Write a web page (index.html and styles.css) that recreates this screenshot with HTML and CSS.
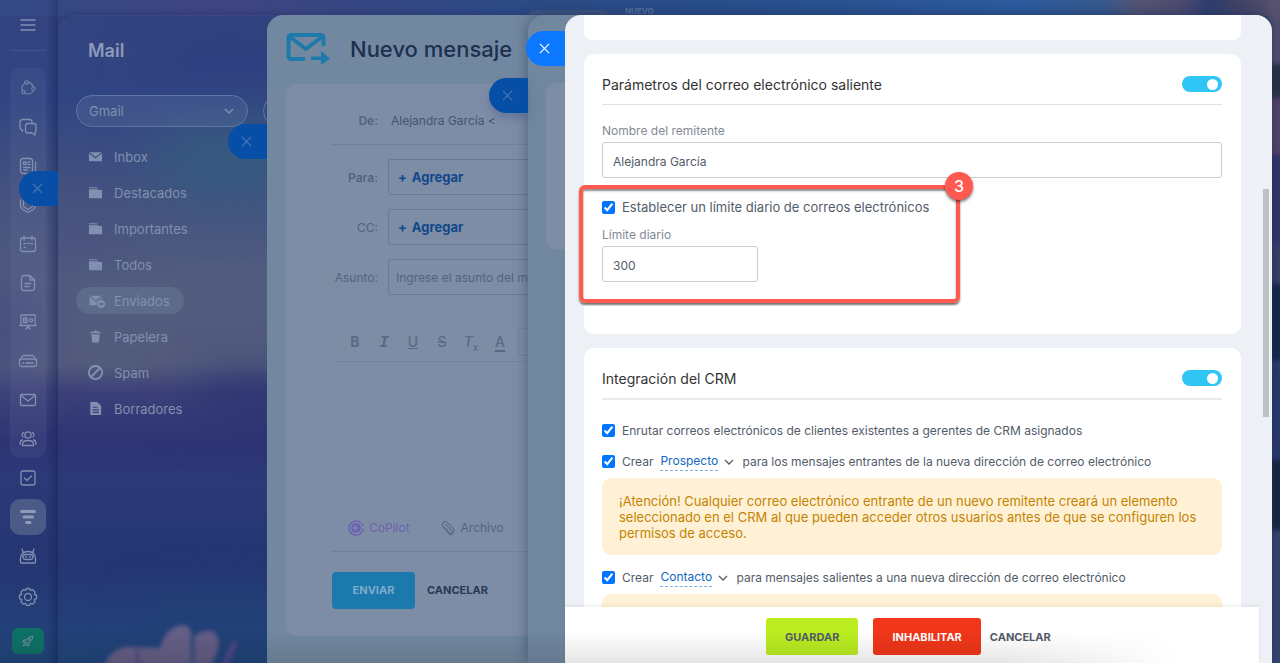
FILE: index.html
```
<!DOCTYPE html>
<html lang="es">
<head>
  <meta charset="UTF-8">
  <title>Mail - Nuevo mensaje</title>
  <link rel="stylesheet" href="styles.css">
</head>
<body>

  <!-- wallpaper -->
  <svg class="wallpaper" viewBox="0 0 1280 663" preserveAspectRatio="none" aria-hidden="true">
    <defs>
      <linearGradient id="sky" x1="0" y1="0" x2="0" y2="1">
        <stop offset="0" stop-color="#33437f"/>
        <stop offset=".15" stop-color="#314583"/>
        <stop offset=".3" stop-color="#455380"/>
        <stop offset=".42" stop-color="#515c7f"/>
        <stop offset=".55" stop-color="#535b7d"/>
        <stop offset=".59" stop-color="#3d4179"/>
        <stop offset=".67" stop-color="#2e3474"/>
        <stop offset=".72" stop-color="#2c3979"/>
        <stop offset=".85" stop-color="#253673"/>
        <stop offset="1" stop-color="#22467c"/>
      </linearGradient>
      <linearGradient id="top" x1="0" y1="0" x2="1" y2="0">
        <stop offset="0" stop-color="#334a85"/>
        <stop offset=".17" stop-color="#3f4482"/>
        <stop offset=".4" stop-color="#2c4a85"/>
        <stop offset=".6" stop-color="#28508e"/>
        <stop offset=".8" stop-color="#2d5ca0"/>
        <stop offset=".86" stop-color="#375a90"/>
        <stop offset=".89" stop-color="#545571"/>
        <stop offset=".92" stop-color="#504c6f"/>
        <stop offset=".945" stop-color="#2f3f6e"/>
        <stop offset=".97" stop-color="#444365"/>
        <stop offset="1" stop-color="#5a5470"/>
      </linearGradient>
      <filter id="soft" x="-30%" y="-30%" width="160%" height="160%" color-interpolation-filters="sRGB"><feGaussianBlur stdDeviation="2"/></filter>
      <filter id="haze" x="-50%" y="-50%" width="200%" height="200%" color-interpolation-filters="sRGB"><feGaussianBlur stdDeviation="26"/></filter>
    </defs>
    <rect width="1280" height="663" fill="url(#sky)"/>
    <g filter="url(#haze)">
      <ellipse cx="230" cy="160" rx="80" ry="40" fill="#355b80"/>
      <ellipse cx="230" cy="62" rx="80" ry="20" fill="#2d3d80"/>
      <ellipse cx="80" cy="230" rx="50" ry="16" fill="#494f80"/>
      <ellipse cx="250" cy="398" rx="60" ry="18" fill="#26306f"/>
      <ellipse cx="10" cy="330" rx="24" ry="60" fill="#434a80"/>
      <ellipse cx="220" cy="620" rx="80" ry="16" fill="#1f4276"/>
    </g>
    <rect width="1280" height="16" fill="url(#top)"/>
    <g filter="url(#soft)">
      <path d="M104 665Q112 648 128 647L160 648Q166 626 184 625Q193 627 191 642Q192 665 192 665Z" fill="#665f86"/>
      <path d="M194 665V636Q202 630 213 631Q222 638 217 652L212 665Z" fill="#645d85"/>
      <path d="M138 665L137 649" fill="none" stroke="#4b4880" stroke-width="3"/>
      <path d="M222 665Q228 646 236 638Q238 650 227 665Z" fill="#514885"/>
      <rect x="1268" y="0" width="14" height="66" fill="#575270"/>
      <rect x="1268" y="64" width="14" height="36" fill="#2c303f"/>
      <rect x="1268" y="98" width="14" height="56" fill="#5c4369"/>
      <rect x="1268" y="154" width="14" height="90" fill="#333469"/>
      <rect x="1268" y="244" width="14" height="40" fill="#3a3b66"/>
      <rect x="1268" y="284" width="14" height="76" fill="#142543"/>
      <rect x="1268" y="360" width="14" height="100" fill="#29396c"/>
      <rect x="1268" y="460" width="14" height="70" fill="#15233f"/>
      <rect x="1268" y="530" width="14" height="133" fill="#39476f"/>
    </g>
  </svg>

  <div class="topbar">
    <span class="topbar-tab"></span>
    <span class="topbar-label">NUEVO</span>
  </div>

  <nav class="rail" aria-label="Menú principal">
    <button class="rail-item rail-menu" aria-label="Menú">
      <svg viewBox="0 0 20 20"><path d="M3 5h14M3 10h14M3 15h14"/></svg>
    </button>
    <div class="rail-group">
      <a class="rail-item dim" href="#" aria-label="Colaboración"><svg viewBox="0 0 20 20"><path d="M10.500 4.500a6 6 0 0 1 4.500 4M15 13a6 6 0 0 1-7.500 2.500M4.500 12.500a6 6 0 0 1 2-7"/><circle cx="8.500" cy="4.500" r="1.700"/><circle cx="15.500" cy="10.500" r="1.700"/><circle cx="5.500" cy="14" r="1.700"/></svg></a>
      <a class="rail-item" href="#" aria-label="Chat"><svg viewBox="0 0 20 20"><path d="M4.500 14.500v-1.500c-1.500-.3-2.500-1-2.500-2V5a2.500 2.500 0 0 1 2.500-2.500h7a2.500 2.500 0 0 1 2.500 2.700"/><path d="M10 6.500h5.500a2.500 2.500 0 0 1 2.500 2.500v4.500a2.500 2.500 0 0 1-1 2V18l-3-2h-4a2.500 2.500 0 0 1-2.500-2.500V9a2.500 2.500 0 0 1 2.500-2.500z"/></svg></a>
      <a class="rail-item" href="#" aria-label="Noticias"><svg viewBox="0 0 20 20"><rect x="2.500" y="2.500" width="12" height="15" rx="2.500"/><path d="M17.500 6v8.500a3 3 0 0 1-2 3M5.500 6h2.500v2.500h-2.500zM10 6h2M10 8.500h2M5.500 11.500h6.500M5.500 14h4"/></svg></a>
      <a class="rail-item" href="#" aria-label="Seguridad"><svg viewBox="0 0 20 20"><path d="M2.500 5v6l1.500 3 6 3.500 6-3.500 1.500-3V5"/><path d="M5.500 5v6.500l4.500 3 4.500-3V5"/></svg></a>
      <a class="rail-item" href="#" aria-label="Calendario"><svg viewBox="0 0 20 20"><rect x="2.500" y="4" width="15" height="13.500" rx="2.500"/><path d="M6 2v4M14 2v4M6 9.500h1.500M9.500 9.500h1.500M13 9.500h1.500M6 13.500h1.500"/></svg></a>
      <a class="rail-item" href="#" aria-label="Documentos"><svg viewBox="0 0 20 20"><path d="M6 2.500h6l4.500 4.500v8a2.500 2.500 0 0 1-2.500 2.500H6a2.500 2.500 0 0 1-2.500-2.500V5a2.500 2.500 0 0 1 2.500-2.500zM12 2.500V7h4.500M7 10.500h6M7 13.500h4"/></svg></a>
      <a class="rail-item" href="#" aria-label="Pizarras"><svg viewBox="0 0 20 20"><path d="M3 3h14v10.500H3zM1.500 13.500h17M8 17l2-2.500 2 2.500M5.500 6h3.500v4.500h-3.500zM5.500 8.200h3.500"/><circle cx="13" cy="8.200" r="1.600"/></svg></a>
      <a class="rail-item" href="#" aria-label="Drive"><svg viewBox="0 0 20 20"><rect x="1.500" y="8" width="17" height="7.500" rx="2"/><path d="M2 9l2.500-4Q5 4.500 6 4.500h8q1 0 1.500.5L18 9M8 12h7M4.800 12h.8"/></svg></a>
      <a class="rail-item" href="#" aria-label="Correo"><svg viewBox="0 0 20 20"><rect x="2.500" y="4.500" width="15" height="11" rx="1"/><path d="M3 5.500l7 5.500 7-5.500"/></svg></a>
      <a class="rail-item" href="#" aria-label="Grupos"><svg viewBox="0 0 20 20"><circle cx="10" cy="6" r="3.200"/><path d="M4.500 16.500v-1.500Q5 11.500 10 11.500t5.500 3.500v1.500zM5.500 3.500Q3 5 5 8M14.500 3.500Q17 5 15 8M4.500 11q-2.500.5-2.500 4.500M15.500 11q2.500.5 2.500 4.500"/></svg></a>
    </div>
    <a class="rail-item" href="#" aria-label="Tareas"><svg viewBox="0 0 20 20"><rect x="3" y="3" width="14" height="14" rx="2"/><path d="M6.500 10l2.500 2.500 4.500-4.500"/></svg></a>
    <a class="rail-item active" href="#" aria-label="CRM"><svg viewBox="0 0 20 20"><path d="M3.500 4.500h13M6 10h8.500M8.500 15.500h3.500" stroke-width="3"/></svg></a>
    <a class="rail-item" href="#" aria-label="Automatización"><svg viewBox="0 0 20 20"><path d="M2.500 16.500v-4Q3 5.500 10 5.500t7.500 7v4q0 .5-1 .5h-13q-1 0-1-.5zM4 3l1.500 4M16 3l-1.500 4"/><rect x="5" y="8.500" width="10" height="5" rx="2.500"/><path d="M7.500 11h1M11.500 11h1"/></svg></a>
    <a class="rail-item rail-settings" href="#" aria-label="Ajustes"><svg viewBox="0 0 20 20"><circle cx="10" cy="10" r="3.500"/><path d="M8.500 1.500h3l.9 1.900 2.200-.7 2.400 2.400-.7 2.200 2.200.9v3.400l-2.200.9.7 2.200-2.400 2.400-2.200-.7-.9 2h-3l-.9-2-2.200.7L3 14.700l.7-2.200-2.200-.9V8.200l2.200-.9L3 5.100l2.400-2.400 2.200.7z"/></svg></a>
    <button class="rocket" aria-label="Inicio rápido"><svg viewBox="0 0 20 20"><path d="M7 9Q10 3.500 17 3q-.5 7-6 10l-2 1-3-3zM7 8.500H4l-1.500 3 3.500.5M11.500 13v3l-3 1.500-.5-3.500M5 14l-2 3 3-1.500"/><circle cx="12" cy="8" r="1.500"/></svg></button>
  </nav>

  <!-- mail section -->
  <main class="panel panel-mail">
    <button class="close-tab" aria-label="Cerrar"><svg viewBox="0 0 12 12"><path d="M1 1l10 10M11 1L1 11"/></svg></button>
    <h1 class="mail-title">Mail</h1>
    <div class="mail-filter">
      <label class="mailbox">
        <select aria-label="Buzón"><option>Gmail</option></select>
        <svg viewBox="0 0 10 10"><path d="M1 3l4 4 4-4"/></svg>
      </label>
      <input class="mail-search" type="text" aria-label="Buscar">
    </div>
    <nav class="folders" aria-label="Carpetas">
      <a href="#"><svg viewBox="0 0 16 16"><path d="M1.500 3.500h13L8 8.500zM1 4.500l7 5.500 7-5.500v8.500H1z"/></svg>Inbox</a>
      <a href="#"><svg viewBox="0 0 16 16"><path d="M1 2.500h8l1.500 1H1zM1 4.500h9.500l1 .8H15V14H1z"/></svg>Destacados</a>
      <a href="#"><svg viewBox="0 0 16 16"><path d="M1 2.500h8l1.500 1H1zM1 4.500h9.500l1 .8H15V14H1z"/></svg>Importantes</a>
      <a href="#"><svg viewBox="0 0 16 16"><path d="M1 2.500h8l1.500 1H1zM1 4.500h9.500l1 .8H15V14H1z"/></svg>Todos</a>
      <a class="current" href="#"><svg class="sent" viewBox="0 0 18 16"><path d="M1.500 3h12L7.500 8zM1 4l6.500 5.500L14 4v2.500a5 5 0 0 0-5 6.500H1z"/><path fill-rule="evenodd" d="M13.500 7.500a4.200 4.200 0 1 0 .01 0zM11 11h2.500V9.500l2.700 2.200-2.700 2.200v-1.500H11z"/></svg>Enviados</a>
      <a href="#"><svg viewBox="0 0 16 16"><path d="M2.500 3H6l1-1.500h2L10 3h3.500v1.500h-11zM3.500 5.500h9l-1 9h-7z"/></svg>Papelera</a>
      <a href="#"><svg viewBox="0 0 16 16"><path fill="none" stroke="currentColor" stroke-width="2" d="M8 1a7 7 0 1 0 .01 0zM3.500 12.500l9-9"/></svg>Spam</a>
      <a href="#"><svg viewBox="0 0 16 16"><path fill-rule="evenodd" d="M2.500 1h7L14 5v10H2.500zM5 6v1.200h5V6zM5 8.800V10h6.500V8.800zM5 11.500v1.200h6.500v-1.200z"/></svg>Borradores</a>
    </nav>
  </main>

  <!-- new message -->
  <section class="panel panel-message">
    <button class="close-tab" aria-label="Cerrar"><svg viewBox="0 0 12 12"><path d="M1 1l10 10M11 1L1 11"/></svg></button>
    <header class="message-header">
      <svg viewBox="0 0 44 32"><path d="M19 26H5a2.500 2.500 0 0 1-2.500-2.500v-19A2.500 2.500 0 0 1 5 2h30a2.500 2.500 0 0 1 2.500 2.500V13M3.500 3.500L20 16 36.500 3.500"/><path class="arrow" d="M25 23.500h10V18l9 7.500-9 6.500v-5H25z"/></svg>
      <h2>Nuevo mensaje</h2>
    </header>
    <form class="message-card">
      <div class="message-row message-from">
        <span class="row-label strong">De:</span>
        <span class="row-value">Alejandra García &lt;</span>
      </div>
      <div class="message-row">
        <span class="row-label strong">Para:</span>
        <button class="recipients" type="button"><span>+</span>Agregar</button>
      </div>
      <div class="message-row">
        <span class="row-label">CC:</span>
        <button class="recipients" type="button"><span>+</span>Agregar</button>
      </div>
      <div class="message-row">
        <label class="row-label" for="asunto">Asunto:</label>
        <input class="subject" id="asunto" type="text" placeholder="Ingrese el asunto del mensaje">
      </div>
      <div class="editor-bar">
        <button type="button"><b>B</b></button>
        <button type="button"><i class="serif">I</i></button>
        <button type="button"><u>U</u></button>
        <button type="button"><s>S</s></button>
        <button type="button"><i>T</i><sub>x</sub></button>
        <button type="button"><span class="ink">A</span></button>
        <select class="font-list" aria-label="Fuente"><option></option></select>
      </div>
      <textarea class="editor" aria-label="Mensaje"></textarea>
      <div class="attach-bar">
        <button class="copilot" type="button"><svg viewBox="0 0 16 16"><path d="M12.500 2.700A7 7 0 1 0 15 8.500" fill="none" stroke="currentColor" stroke-width="1.500"/><path d="M15 6Q14.500 4.500 13.500 3.700" fill="none" stroke="currentColor" stroke-width="1.500"/><circle cx="8" cy="8" r="5"/><path class="spark" d="M7.500 4.500l.9 2.600 2.600.9-2.600.9-.9 2.600-.9-2.600L4 8l2.600-.9z"/></svg>CoPilot</button>
        <button type="button"><svg viewBox="0 0 16 16"><path d="M4 6.500l5.500 6M5.500 4l6 6.500q1 1.500 0 2.500-1.500 1.500-3 0L3 7Q1 4.500 3 2.500t4.500 0L13 8.500q2 2.500 0 5-2 2-4.500.5" fill="none" stroke="currentColor"/></svg>Archivo</button>
      </div>
      <div class="message-actions">
        <button class="send" type="button">ENVIAR</button>
        <button class="text-button" type="button">CANCELAR</button>
      </div>
    </form>
  </section>

  <section class="panel panel-back">
    <button class="close-tab" aria-label="Cerrar"><svg viewBox="0 0 12 12"><path d="M1 1l10 10M11 1L1 11"/></svg></button>
    <div class="back-card"></div>
  </section>

  <!-- mailbox settings -->
  <section class="panel panel-settings">
    <button class="close-tab active" aria-label="Cerrar"><svg viewBox="0 0 12 12"><path d="M1 1l10 10M11 1L1 11"/></svg></button>
    <div class="settings-scroll">
      <div class="card card-prev"></div>

      <div class="card card-outgoing">
        <div class="card-head">
          <h3>Parámetros del correo electrónico saliente</h3>
          <input class="switch" type="checkbox" checked aria-label="Parámetros del correo electrónico saliente">
        </div>
        <label class="field-label" for="remitente">Nombre del remitente</label>
        <input class="field" id="remitente" type="text" value="Alejandra García">
        <div class="limit">
          <label class="check"><input type="checkbox" checked>Establecer un límite diario de correos electrónicos</label>
          <label class="field-label" for="limite">Límite diario</label>
          <input class="field field-small" id="limite" type="text" value="300">
          <div class="highlight"><span class="step">3</span></div>
        </div>
      </div>

      <div class="card card-crm">
        <div class="card-head thick">
          <h3>Integración del CRM</h3>
          <input class="switch" type="checkbox" checked aria-label="Integración del CRM">
        </div>
        <label class="check"><input type="checkbox" checked>Enrutar correos electrónicos de clientes existentes a gerentes de CRM asignados</label>
        <div class="check">
          <input id="entrantes" type="checkbox" checked>
          <label for="entrantes">Crear</label>
          <select aria-label="Elemento para mensajes entrantes"><option>Prospecto</option></select>
          <svg viewBox="0 0 10 10"><path d="M1 3l4 4 4-4"/></svg>
          <span>para los mensajes entrantes de la nueva dirección de correo electrónico</span>
        </div>
        <p class="alert">¡Atención! Cualquier correo electrónico entrante de un nuevo remitente creará un elemento seleccionado en el CRM al que pueden acceder otros usuarios antes de que se configuren los permisos de acceso.</p>
        <div class="check">
          <input id="salientes" type="checkbox" checked>
          <label for="salientes">Crear</label>
          <select aria-label="Elemento para mensajes salientes"><option>Contacto</option></select>
          <svg viewBox="0 0 10 10"><path d="M1 3l4 4 4-4"/></svg>
          <span>para mensajes salientes a una nueva dirección de correo electrónico</span>
        </div>
        <div class="alert"></div>
      </div>
    </div>
    <div class="scrollbar"></div>
    <footer class="settings-footer">
      <button class="save">GUARDAR</button>
      <button class="disable">INHABILITAR</button>
      <button class="text-button">CANCELAR</button>
    </footer>
  </section>

  <div class="bottom-shade"></div>

</body>
</html>
```
FILE: styles.css
```
* {
  box-sizing: border-box;
}
body {
  margin: 0;
  height: 100vh;
  overflow: hidden;
  position: relative;
  background: #2d3b7a;
  font-family: Inter, "Open Sans", sans-serif;
  font-size: 13px;
  color: #525c69;
}
button, input, select, textarea {
  font: inherit;
  color: inherit;
}
button {
  border: none;
  background: none;
  padding: 0;
  cursor: pointer;
}
select {
  appearance: none;
  border: none;
  background: none;
  padding: 0;
}
h1, h2, h3, p {
  margin: 0;
}
a {
  color: inherit;
  text-decoration: none;
}
svg {
  flex: none;
}
.wallpaper {
  position: absolute;
  inset: 0;
  width: 100%;
  height: 100%;
}

/* top bar */
.topbar {
  position: absolute;
  top: 0;
  left: 528px;
  display: flex;
  gap: 15px;
}
.topbar-tab {
  width: 82px;
  height: 30px;
  margin-top: 10px;
  border-radius: 8px;
  background: #3f5783;
}
.topbar-label {
  padding-top: 7px;
  font-size: 8px;
  line-height: 9px;
  font-weight: 700;
  color: #6078a4;
}

/* left rail */
.rail {
  position: absolute;
  top: 0;
  bottom: 0;
  left: 0;
  width: 58px;
  padding: 0 12px 0 10px;
  display: flex;
  flex-direction: column;
  color: #8190ae;
  background: linear-gradient(to right, transparent 80%, rgba(22, 36, 84, .35));
}
.rail svg {
  width: 20px;
  height: 20px;
  fill: none;
  stroke: currentColor;
  stroke-width: 1.3;
  stroke-linecap: round;
  stroke-linejoin: round;
}
.rail-item {
  flex: none;
  width: 36px;
  height: 39px;
  display: flex;
  align-items: center;
  justify-content: center;
}
.rail-menu {
  height: 51px;
  border-bottom: 1px solid #42558b;
}
.rail-item.dim {
  opacity: .75;
}
.rail-group {
  margin-top: 17px;
  border-radius: 10px;
  background: rgba(140, 150, 190, .1);
}
.rail-item.active {
  height: 36px;
  margin: 2px 0 1px;
  border-radius: 10px;
  background: #4c5a87;
  color: #8f9cb8;
}
.rail-settings {
  height: 44px;
}
.rocket {
  width: 32px;
  height: 26px;
  margin: 9px 0 0 2px;
  border-radius: 6px;
  background: #0e7166;
  display: flex;
  align-items: center;
  justify-content: center;
}
.rocket svg {
  width: 14px;
  height: 14px;
}

/* sliding panels */
.panel {
  position: absolute;
  top: 15px;
  right: 8px;
  bottom: 0;
  border-radius: 16px 16px 0 0;
}
.close-tab {
  position: absolute;
  left: -39px;
  width: 39px;
  height: 35px;
  padding-left: 13px;
  border-radius: 18px 0 0 18px;
  background: #074ea6;
  color: #4a78b8;
  display: flex;
  align-items: center;
}
.close-tab svg {
  width: 11px;
  height: 11px;
  fill: none;
  stroke: currentColor;
  stroke-width: 1.3;
}
.close-tab.active {
  background: #0b78ff;
  color: #fff;
}

/* mail */
.panel-mail {
  left: 58px;
  padding: 24px 0 0 18px;
  color: #8190ae;
  box-shadow: 0 0 10px rgba(20, 30, 80, .35);
}
.panel-mail .close-tab {
  top: 156px;
}
.mail-title {
  padding-left: 12px;
  font-size: 18px;
  line-height: 24px;
  font-weight: 600;
  color: #8d9ab8;
}
.mail-filter {
  display: flex;
  gap: 15px;
  margin-top: 32px;
}
.mailbox {
  width: 172px;
  height: 32px;
  padding: 0 13px 0 12px;
  border: 1px solid #5e75a3;
  border-radius: 16px;
  background: rgba(130, 150, 190, .17);
  display: flex;
  align-items: center;
}
.mailbox select {
  flex: 1;
}
.mailbox svg {
  width: 10px;
  height: 10px;
  fill: none;
  stroke: currentColor;
  stroke-width: 1.5;
}
.mail-search {
  width: 200px;
  border: 1px solid #5e75a3;
  border-radius: 16px;
  background: none;
}
.folders {
  margin-top: 16px;
  display: flex;
  flex-direction: column;
  align-items: flex-start;
  gap: 9px;
}
.folders a {
  height: 27px;
  padding: 0 14px 0 12px;
  border-radius: 14px;
  display: flex;
  align-items: center;
  gap: 11px;
}
.folders svg {
  width: 15px;
  height: 15px;
  fill: currentColor;
}
.folders .sent {
  width: 18px;
  margin-right: -3px;
}
.folders .current {
  background: #5d6b8b;
}

/* new message */
.panel-message {
  left: 267px;
  padding: 18px 0 0 19px;
  background: #7288a0;
  color: #52637f;
}
.panel-message .close-tab {
  top: 109px;
}
.message-header {
  display: flex;
  align-items: center;
  gap: 20px;
}
.message-header svg {
  width: 44px;
  height: 32px;
  fill: none;
  stroke: #1d7aab;
  stroke-width: 4;
}
.message-header .arrow {
  fill: #1d7aab;
  stroke: none;
}
.message-header h2 {
  font-size: 22px;
  line-height: 32px;
  font-weight: 500;
  color: #1e2f50;
}
.message-card {
  height: 552px;
  margin: 19px 19px 0 0;
  padding: 18px 46px 0;
  border-radius: 10px;
  background: #7e8da6;
  display: flex;
  flex-direction: column;
}
.message-row {
  display: flex;
  align-items: center;
  gap: 10px;
  height: 36px;
  margin-bottom: 14px;
}
.message-from {
  height: 43px;
  padding-bottom: 5px;
  border-bottom: 1px solid #6f829c;
}
.row-label {
  width: 46px;
  font-size: 12px;
  text-align: right;
}
.strong {
  font-weight: 600;
}
.row-value {
  padding-left: 3px;
  font-size: 12px;
  color: #425577;
}
.recipients, .subject {
  flex: 1;
  height: 36px;
  padding: 0 9px;
  border: 1px solid #66799a;
  border-radius: 3px;
  background: none;
  text-align: left;
}
.recipients {
  font-size: 13px;
  font-weight: 700;
  color: #0f4889;
}
.recipients span {
  margin-right: 5px;
}
.subject {
  font-size: 12px;
  padding: 0 7px;
}
.subject::placeholder {
  color: #52637f;
}
.editor-bar {
  height: 53px;
  padding: 13px 0 0 12px;
  border-bottom: 1px solid #7285a0;
  display: flex;
  align-items: center;
  gap: 7px;
  color: #586a86;
}
.editor-bar button {
  width: 22px;
  height: 20px;
  font-size: 14px;
  line-height: 20px;
  font-weight: 500;
}
.editor-bar sub {
  font-size: 10px;
  line-height: 1px;
}
.serif {
  font-family: "Liberation Mono", monospace;
  font-size: 16px;
  font-weight: 700;
}
.ink {
  border-bottom: 2px solid;
}
.font-list {
  flex: 1;
  height: 28px;
  border: 1px solid #6f829c;
  border-radius: 4px;
}
.editor {
  flex: 1;
  border: none;
  background: none;
  resize: none;
}
.attach-bar {
  height: 48px;
  padding-left: 16px;
  border-bottom: 1px solid #6f829c;
  display: flex;
  align-items: center;
  gap: 30px;
}
.attach-bar button {
  display: flex;
  align-items: center;
  gap: 5px;
  font-size: 12px;
}
.attach-bar svg {
  width: 16px;
  height: 16px;
  fill: currentColor;
}
.attach-bar .spark {
  fill: #7e8da6;
}
.attach-bar .copilot {
  color: #6b62b2;
}
.message-actions {
  height: 84px;
  display: flex;
  align-items: center;
  gap: 12px;
  padding-bottom: 8px;
  font-size: 11px;
  font-weight: 700;
}
.send {
  width: 83px;
  height: 37px;
  border-radius: 4px;
  background: #1b79ad;
  color: #7eabca;
}
.message-actions .text-button {
  color: #263856;
}

.panel-back {
  left: 528px;
  padding: 68px 0 0 18px;
  background: #7187a0;
  box-shadow: 0 0 14px rgba(40, 60, 100, .6);
}
.panel-back .close-tab {
  top: 63px;
  box-shadow: 0 6px 8px rgba(60, 80, 140, .35);
}
.back-card {
  height: 166px;
  border-radius: 10px;
  background: #7e8da6;
}

/* mailbox settings */
.panel-settings {
  left: 565px;
  background: #edf1f5;
  display: flex;
  flex-direction: column;
}
.panel-settings .close-tab {
  top: 16px;
}
.settings-scroll {
  flex: 1;
  min-height: 0;
  overflow: hidden;
  padding: 0 31px 0 19px;
  display: flex;
  flex-direction: column;
  gap: 14px;
}
.card {
  flex: none;
  padding: 10px 19px 0 18px;
  border-radius: 10px;
  background: #fff;
}
.card-prev {
  height: 25px;
  border-radius: 0 0 8px 8px;
}
.card-outgoing {
  padding-bottom: 52px;
}
.card-head {
  height: 41px;
  border-bottom: 1px solid #dfe0e3;
  display: flex;
  align-items: center;
  justify-content: space-between;
}
.card-head.thick {
  height: 42px;
  border-bottom: 2px solid #e9eaec;
  margin-bottom: 15px;
}
.card-head h3 {
  font-size: 14px;
  font-weight: 400;
  color: #333;
}
.switch {
  appearance: none;
  width: 40px;
  height: 16px;
  margin: 0;
  padding: 3px 4px;
  border-radius: 8px;
  background: #2fc6f6;
  display: flex;
  justify-content: flex-end;
}
.switch::before {
  content: "";
  width: 11px;
  height: 11px;
  border-radius: 50%;
  background: #fff;
}
.field-label {
  display: block;
  padding-top: 18px;
  font-size: 12px;
  line-height: 16px;
  color: #828b95;
}
.field {
  display: block;
  width: 100%;
  height: 36px;
  margin-top: 3px;
  padding: 2px 10px 0;
  border: 1px solid #c6cdd3;
  border-radius: 3px;
  background: #fff;
  font-size: 12px;
}
.limit {
  position: relative;
  padding-top: 14px;
}
.limit .check {
  height: 30px;
  font-size: 13px;
}
.limit .field-label {
  padding-top: 5px;
}
.field-small {
  width: 156px;
}
.check {
  height: 31px;
  display: flex;
  align-items: center;
  font-size: 12px;
}
.check input {
  flex: none;
  width: 13px;
  height: 13px;
  margin: 0 7px 0 0;
  accent-color: #0075ff;
}
.check select {
  margin-left: 7px;
  padding-bottom: 2px;
  border-bottom: 1px dashed #7fb0dc;
  color: #1168bf;
}
.check svg {
  width: 10px;
  height: 10px;
  margin: 0 8px 0 6px;
  fill: none;
  stroke: #525c69;
  stroke-width: 1.3;
}
.alert {
  min-height: 77px;
  margin: 1px 0 7px;
  padding: 15px 17px 14px;
  border-radius: 9px;
  background: #fff1d6;
  font-size: 13px;
  line-height: 16px;
  color: #c48300;
}
.highlight {
  position: absolute;
  top: 7px;
  left: -23px;
  width: 381px;
  height: 118px;
  border: 4px solid #ff5a4f;
  border-radius: 6px;
  box-shadow: 0 2px 2px rgba(0, 0, 0, .55), inset 0 2px 2px rgba(0, 0, 0, .45);
  pointer-events: none;
}
.step {
  position: absolute;
  top: -17px;
  right: -17px;
  width: 28px;
  height: 28px;
  border-radius: 50%;
  background: #ff5a4f;
  box-shadow: 0 2px 3px rgba(0, 0, 0, .5);
  color: #fff;
  font-size: 16px;
  line-height: 28px;
  font-weight: 500;
  text-align: center;
}
.scrollbar {
  position: absolute;
  top: 174px;
  right: 3px;
  width: 6px;
  height: 228px;
  background: #bcc1c3;
}
.settings-footer {
  position: relative;
  height: 56px;
  margin-right: 13px;
  padding: 3px 0 0 201px;
  background: #fff;
  box-shadow: 0 -2px 4px rgba(0, 0, 0, .06);
  display: flex;
  align-items: center;
  font-size: 11px;
  font-weight: 700;
}
.save, .disable {
  height: 37px;
  padding: 0 19px;
  border-radius: 3px;
}
.save {
  margin-right: 15px;
  background: #bbed21;
  color: #535c69;
}
.disable {
  margin-right: 9px;
  background: #f1361a;
  color: #fff;
}
.bottom-shade {
  position: absolute;
  left: 0;
  right: 8%;
  bottom: 0;
  height: 32px;
  background: linear-gradient(to bottom, transparent, rgba(0, 0, 0, .1));
  -webkit-mask-image: linear-gradient(to right, #000 85%, transparent);
  mask-image: linear-gradient(to right, #000 85%, transparent);
  pointer-events: none;
}
```
